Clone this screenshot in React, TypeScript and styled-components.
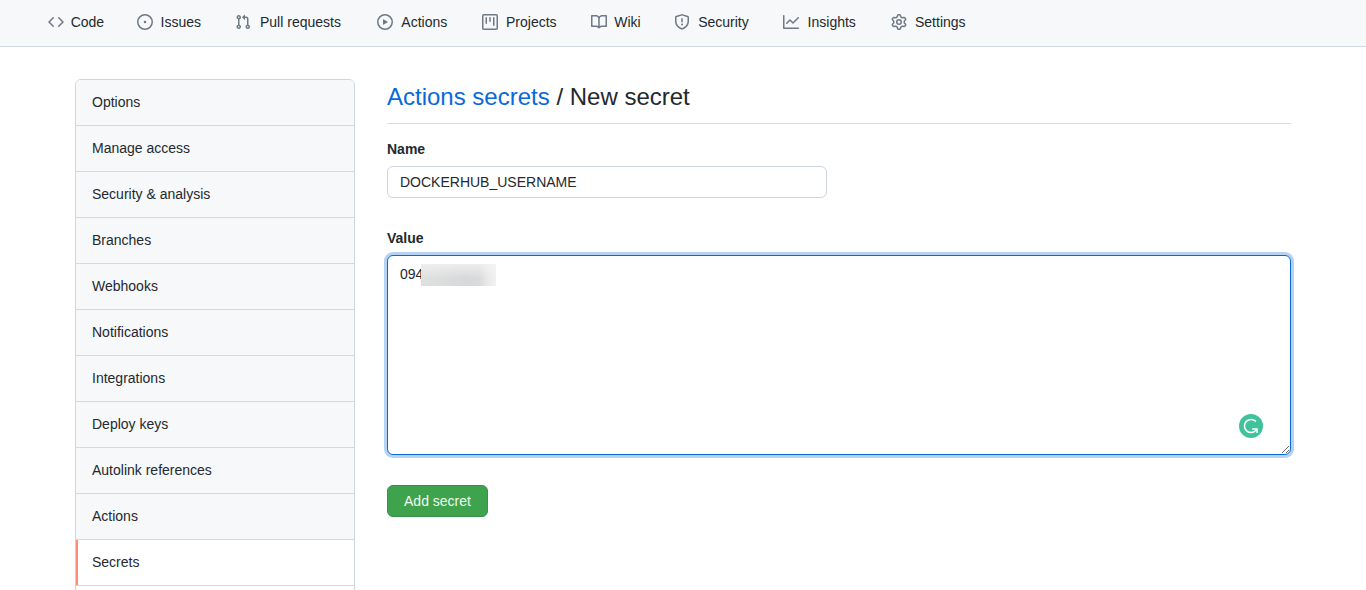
import React from "react";
import styled, { createGlobalStyle } from "styled-components";

const GlobalStyle = createGlobalStyle`
  *, *::before, *::after { box-sizing: border-box; }
  html, body { margin: 0; height: 100%; overflow: hidden; background: #fff; }
  body {
    font-family: "Liberation Sans", Arial, sans-serif;
    font-size: 14px;
    line-height: 21px;
    color: #24292e;
  }
`;

const Page = styled.div`
  height: 590px;
  overflow: hidden;
`;

const RepoNav = styled.nav`
  display: flex;
  height: 47px;
  padding: 0 0 2px 48px;
  align-items: center;
  background: #f6f8fa;
  border-bottom: 1px solid #d3d9e0;
`;

const NavTab = styled.a<{ $width: number; $gap: number }>`
  display: flex;
  flex: none;
  align-items: center;
  width: ${(p) => p.$width}px;
  gap: ${(p) => p.$gap}px;
  color: #24292e;
  text-decoration: none;
  white-space: nowrap;
`;

const NavIcon = styled.svg`
  flex: none;
  width: 16px;
  height: 16px;
  fill: #6e7985;
`;

const Container = styled.div`
  display: grid;
  grid-template-columns: 280px 904px;
  column-gap: 32px;
  align-items: start;
  padding: 32px 75px 0;
`;

const Menu = styled.aside`
  background: #fff;
  border: 1px solid #ced5dd;
  border-radius: 6px;
  overflow: hidden;
`;

const MenuItem = styled.a<{ $selected?: boolean }>`
  position: relative;
  display: flex;
  align-items: center;
  height: 46px;
  padding: 0 16px;
  border-bottom: 1px solid #d3d9e0;
  background: ${(p) => (p.$selected ? "#fff" : "#f6f8fa")};
  color: #24292e;
  text-decoration: none;

  &::before {
    content: "";
    display: ${(p) => (p.$selected ? "block" : "none")};
    position: absolute;
    top: 0;
    bottom: 0;
    left: 0;
    width: 2px;
    background: #fd8c73;
  }
`;

const Submenu = styled.div`
  height: 70px;
  background: #fff;
`;

const Content = styled.main`
  display: flex;
  flex-direction: column;
  align-items: flex-start;
`;

const Heading = styled.h2`
  width: 100%;
  height: 45px;
  margin: 0 0 15px;
  border-bottom: 1px solid #d6dde5;
  font-size: 24px;
  font-weight: 400;
  line-height: 36px;

  a { color: #0969da; text-decoration: none; }
`;

const Label = styled.label`
  margin-bottom: 6px;
  font-weight: 700;
`;

const TextInput = styled.input`
  width: 440px;
  height: 32px;
  margin-bottom: 30px;
  padding: 5px 12px;
  border: 1px solid #ced5de;
  border-radius: 6px;
  outline: none;
  background: #fff;
  color: #24292e;
  font: inherit;
  line-height: 20px;
`;

const ValueField = styled.div`
  position: relative;
  width: 904px;
  height: 200px;
  margin-bottom: 30px;
`;

const TextArea = styled.textarea`
  display: block;
  width: 100%;
  height: 100%;
  padding: 8px 12px;
  border: 1px solid #0969da;
  border-radius: 6px;
  outline: none;
  box-shadow: 0 0 0 3px rgba(9, 105, 218, 0.3);
  background: #fff;
  color: #24292e;
  font: inherit;
`;

const Redaction = styled.div`
  position: absolute;
  top: 9px;
  left: 34px;
  width: 75px;
  height: 22px;
  background:
    linear-gradient(180deg, rgba(244, 244, 244, 0.75), rgba(244, 244, 244, 0) 65%),
    linear-gradient(90deg, #dfe0e0 0%, #dcdddd 25%, #d7d8d9 60%, #d9dadb 78%, #e8e8e8 88%, #f2f2f2 100%);
`;

const AssistantBadge = styled.svg`
  position: absolute;
  right: 28px;
  bottom: 17px;
  width: 24px;
  height: 24px;
`;

const SubmitButton = styled.button`
  width: 101px;
  height: 32px;
  padding: 0;
  border: 1px solid #36914a;
  border-radius: 6px;
  background: #3fa34d;
  color: #eef9f0;
  font: inherit;
  line-height: 20px;
`;

type Tab = { label: string; width: number; gap: number; path: string };

const tabs: Tab[] = [
  { label: "Code", width: 89, gap: 6.7, path: "M4.72 3.22a.75.75 0 011.06 1.06L2.06 8l3.72 3.72a.75.75 0 11-1.06 1.06L.47 8.53a.75.75 0 010-1.06l4.25-4.25zm6.56 0a.75.75 0 10-1.06 1.06L13.94 8l-3.72 3.72a.75.75 0 101.06 1.06l4.25-4.25a.75.75 0 000-1.06l-4.25-4.25z" },
  { label: "Issues", width: 98, gap: 7.5, path: "M8 9.3a1.3 1.3 0 100-2.6 1.3 1.3 0 000 2.6zM8 0a8 8 0 100 16A8 8 0 008 0zM1.5 8a6.5 6.5 0 1113 0 6.5 6.5 0 01-13 0z" },
  { label: "Pull requests", width: 142, gap: 9, path: "M7.177 3.073L9.573.677A.25.25 0 0110 .854v4.792a.25.25 0 01-.427.177L7.177 3.427a.25.25 0 010-.354zM3.75 2.5a.75.75 0 100 1.5.75.75 0 000-1.5zm-2.25.75a2.25 2.25 0 113 2.122v5.256a2.251 2.251 0 11-1.5 0V5.372A2.25 2.25 0 011.5 3.25zM11 2.5h-1V4h1a1 1 0 011 1v5.628a2.251 2.251 0 101.5 0V5A2.5 2.5 0 0011 2.5zm1 10.25a.75.75 0 111.5 0 .75.75 0 01-1.5 0zM3.75 12a.75.75 0 100 1.5.75.75 0 000-1.5z" },
  { label: "Actions", width: 105, gap: 8.3, path: "M1.5 8a6.5 6.5 0 1113 0 6.5 6.5 0 01-13 0zM8 0a8 8 0 100 16A8 8 0 008 0zM6.379 5.227A.25.25 0 006 5.442v5.117a.25.25 0 00.379.214l4.264-2.559a.25.25 0 000-.428L6.379 5.227z" },
  { label: "Projects", width: 109, gap: 8, path: "M1.75 0A1.75 1.75 0 000 1.75v12.5C0 15.216.784 16 1.75 16h12.5A1.75 1.75 0 0016 14.25V1.75A1.75 1.75 0 0014.25 0H1.75zM1.5 1.75a.25.25 0 01.25-.25h12.5a.25.25 0 01.25.25v12.5a.25.25 0 01-.25.25H1.75a.25.25 0 01-.25-.25V1.75zM11.75 3a.75.75 0 00-.75.75v7.5a.75.75 0 001.5 0v-7.5a.75.75 0 00-.75-.75zm-8.25.75a.75.75 0 011.5 0v5.5a.75.75 0 01-1.5 0v-5.5zM8 3a.75.75 0 00-.75.75v3.5a.75.75 0 001.5 0v-3.5A.75.75 0 008 3z" },
  { label: "Wiki", width: 83, gap: 7.3, path: "M0 1.75A.75.75 0 01.75 1h4.253c1.227 0 2.317.59 3 1.501A3.744 3.744 0 0111.006 1h4.245a.75.75 0 01.75.75v10.5a.75.75 0 01-.75.75h-4.507a2.25 2.25 0 00-1.591.659l-.622.621a.75.75 0 01-1.06 0l-.622-.621A2.25 2.25 0 005.258 13H.75a.75.75 0 01-.75-.75V1.75zm8.755 3a2.25 2.25 0 012.25-2.25H14.5v9h-3.757c-.71 0-1.4.201-1.992.572l.004-7.322zm-1.504 7.324l.004-5.073-.002-2.253A2.25 2.25 0 005.003 2.5H1.5v9h3.757a3.75 3.75 0 011.994.574z" },
  { label: "Security", width: 109, gap: 8.2, path: "M7.467.133a1.75 1.75 0 011.066 0l5.25 1.68A1.75 1.75 0 0115 3.48V7c0 1.566-.32 3.182-1.303 4.682-.983 1.498-2.585 2.813-5.032 3.855a1.7 1.7 0 01-1.33 0c-2.447-1.042-4.049-2.357-5.032-3.855C1.32 10.182 1 8.566 1 7V3.48a1.75 1.75 0 011.217-1.667l5.25-1.68zm.61 1.429a.25.25 0 00-.153 0l-5.25 1.68a.25.25 0 00-.174.238V7c0 1.358.275 2.666 1.057 3.86.784 1.194 2.121 2.34 4.366 3.297a.2.2 0 00.154 0c2.245-.956 3.582-2.104 4.366-3.298C13.225 9.666 13.5 8.36 13.5 7V3.48a.25.25 0 00-.174-.237l-5.25-1.68zM9 10.5a1 1 0 11-2 0 1 1 0 012 0zm-.25-5.75a.75.75 0 10-1.5 0v3a.75.75 0 001.5 0v-3z" },
  { label: "Insights", width: 108, gap: 8.6, path: "M1.5 1.75a.75.75 0 00-1.5 0v12.5c0 .414.336.75.75.75h14.5a.75.75 0 000-1.5H1.5V1.75zm14.28 2.53a.75.75 0 00-1.06-1.06L10 7.94 7.53 5.47a.75.75 0 00-1.06 0L3.22 8.72a.75.75 0 001.06 1.06L7 7.06l2.47 2.47a.75.75 0 001.06 0l5.25-5.25z" },
  { label: "Settings", width: 90, gap: 8, path: "M7.429 1.525a6.593 6.593 0 011.142 0c.036.003.108.036.137.146l.289 1.105c.147.56.55.967.997 1.189.174.086.341.183.501.29.417.278.97.423 1.53.27l1.102-.303c.11-.03.175.016.195.046.219.31.41.641.573.989.014.031.022.11-.059.19l-.815.806c-.411.406-.562.957-.53 1.456a4.588 4.588 0 010 .582c-.032.499.119 1.05.53 1.456l.815.806c.08.08.073.159.059.19a6.494 6.494 0 01-.573.99c-.02.029-.086.074-.195.045l-1.103-.303c-.559-.153-1.112-.008-1.529.27-.16.107-.327.204-.5.29-.449.222-.851.628-.998 1.189l-.289 1.105c-.029.11-.101.143-.137.146a6.613 6.613 0 01-1.142 0c-.036-.003-.108-.037-.137-.146l-.289-1.105c-.147-.56-.55-.967-.997-1.189a4.502 4.502 0 01-.501-.29c-.417-.278-.97-.423-1.53-.27l-1.102.303c-.11.03-.175-.016-.195-.046a6.492 6.492 0 01-.573-.989c-.014-.031-.022-.11.059-.19l.815-.806c.411-.406.562-.957.53-1.456a4.587 4.587 0 010-.582c.032-.499-.119-1.05-.53-1.456l-.815-.806c-.08-.08-.073-.159-.059-.19a6.44 6.44 0 01.573-.99c.02-.029.086-.075.195-.045l1.103.303c.559.153 1.112.008 1.529-.27.16-.107.327-.204.5-.29.449-.222.851-.628.998-1.189l.289-1.105c.029-.11.101-.143.137-.146zM8 0c-.236 0-.47.01-.701.03-.743.065-1.29.615-1.458 1.261l-.29 1.106c-.017.066-.078.158-.211.224a5.994 5.994 0 00-.668.386c-.123.082-.233.09-.3.071L3.27 2.776c-.644-.177-1.392.02-1.82.63a7.977 7.977 0 00-.704 1.217c-.315.675-.111 1.422.363 1.891l.815.806c.05.048.098.147.088.294a6.084 6.084 0 000 .772c.01.147-.038.246-.088.294l-.815.806c-.474.469-.678 1.216-.363 1.891.2.428.436.835.704 1.218.428.609 1.176.806 1.82.63l1.103-.303c.066-.019.176-.011.299.071.213.143.436.272.668.386.133.066.194.158.212.224l.289 1.106c.169.646.715 1.196 1.458 1.26a8.094 8.094 0 001.402 0c.743-.064 1.29-.614 1.458-1.26l.29-1.106c.017-.066.078-.158.211-.224a5.98 5.98 0 00.668-.386c.123-.082.233-.09.3-.071l1.102.302c.644.177 1.392-.02 1.82-.63.268-.382.505-.789.704-1.217.315-.675.111-1.422-.364-1.891l-.814-.806c-.05-.048-.098-.147-.088-.294a6.1 6.1 0 000-.772c-.01-.147.039-.246.088-.294l.814-.806c.475-.469.679-1.216.364-1.891a7.992 7.992 0 00-.704-1.218c-.428-.609-1.176-.806-1.82-.63l-1.103.303c-.066.019-.176.011-.299-.071a5.991 5.991 0 00-.668-.386c-.133-.066-.194-.158-.212-.224L10.16 1.29C9.99.645 9.444.095 8.701.031A8.094 8.094 0 008 0zm1.5 8a1.5 1.5 0 11-3 0 1.5 1.5 0 013 0zM11 8a3 3 0 11-6 0 3 3 0 016 0z" },
];

const menuItems = [
  "Options",
  "Manage access",
  "Security & analysis",
  "Branches",
  "Webhooks",
  "Notifications",
  "Integrations",
  "Deploy keys",
  "Autolink references",
  "Actions",
  "Secrets",
];

export default function App() {
  return (
    <>
      <GlobalStyle />
      <Page>
        <RepoNav>
          {tabs.map((tab) => (
            <NavTab key={tab.label} $width={tab.width} $gap={tab.gap}>
              <NavIcon viewBox="0 0 16 16">
                <path fillRule="evenodd" d={tab.path} />
              </NavIcon>
              <span>{tab.label}</span>
            </NavTab>
          ))}
        </RepoNav>
        <Container>
          <Menu>
            {menuItems.map((item) => (
              <MenuItem key={item} $selected={item === "Secrets"}>
                {item}
              </MenuItem>
            ))}
            <Submenu />
          </Menu>
          <Content>
            <Heading>
              <a>Actions secrets</a> / New secret
            </Heading>
            <Label htmlFor="secret-name">Name</Label>
            <TextInput id="secret-name" defaultValue="DOCKERHUB_USERNAME" />
            <Label htmlFor="secret-value">Value</Label>
            <ValueField>
              <TextArea id="secret-value" defaultValue="094" spellCheck={false} />
              <Redaction />
              <AssistantBadge viewBox="0 0 24 24">
                <circle cx="12" cy="12" r="12" fill="#40c29a" />
                <path
                  d="M17 7.6A6.6 6.6 0 1 0 16.8 16.6L18 15"
                  fill="none"
                  stroke="#fff"
                  strokeWidth="1.5"
                />
                <path d="M13.2 14.2H18.8V19H17.3V15.7H13.2Z" fill="#fff" />
              </AssistantBadge>
            </ValueField>
            <SubmitButton type="button">Add secret</SubmitButton>
          </Content>
        </Container>
      </Page>
    </>
  );
}
